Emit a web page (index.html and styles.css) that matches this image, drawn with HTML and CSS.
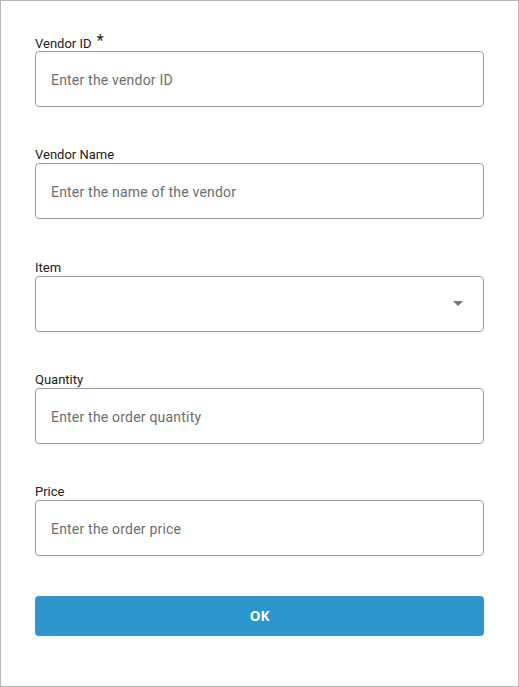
FILE: index.html
```html
<!DOCTYPE html>
<html>
<head>
<meta charset="utf-8">
<link rel="stylesheet" href="styles.css">
</head>
<body>
<form class="form">
  <div class="field">
    <label class="label">Vendor ID <span class="req">*</span></label>
    <div class="input"><span class="ph">Enter the vendor ID</span></div>
  </div>
  <div class="field">
    <label class="label">Vendor Name</label>
    <div class="input"><span class="ph">Enter the name of the vendor</span></div>
  </div>
  <div class="field">
    <label class="label">Item</label>
    <div class="input select">
      <span class="ph"></span>
      <svg class="caret" width="10" height="5" viewBox="0 0 10 5"><path d="M0 0h10L5 5z" fill="#757575"/></svg>
    </div>
  </div>
  <div class="field">
    <label class="label">Quantity</label>
    <div class="input"><span class="ph">Enter the order quantity</span></div>
  </div>
  <div class="field">
    <label class="label">Price</label>
    <div class="input"><span class="ph">Enter the order price</span></div>
  </div>
  <button type="button" class="btn">OK</button>
</form>
</body>
</html>
```
FILE: styles.css
```css
html, body {
  margin: 0;
  padding: 0;
  background: #fff;
}
body {
  width: 519px;
  height: 687px;
  box-sizing: border-box;
  border: 1px solid #b5b5b5;
  font-family: Roboto, "Liberation Sans", sans-serif;
}
.form {
  display: flex;
  flex-direction: column;
  gap: 39.25px;
  padding: 33px 34px 0 34px;
}
.field {
  display: flex;
  flex-direction: column;
}
.label {
  font-size: 13px;
  line-height: 16px;
  height: 16px;
  padding-top: 1px;
  color: #212121;
}
.req {
  font-size: 16px;
  margin-left: 2px;
  position: relative;
  top: -2px;
  color: #212121;
}
.input {
  height: 56px;
  box-sizing: border-box;
  border: 1px solid #9e9e9e;
  border-radius: 4px;
  display: flex;
  align-items: center;
  padding: 2px 20px 0 15px;
}
.ph {
  font-size: 14px;
  letter-spacing: 0.2px;
  color: #6e6e6e;
  flex: 1;
}
.select {
  padding-top: 0;
}
.caret {
  display: block;
}
.btn {
  margin-top: 0.75px;
  height: 40px;
  border: none;
  border-radius: 4px;
  background: #2b97cd;
  color: #fff;
  font-family: "Open Sans", "Noto Sans", sans-serif;
  font-weight: 700;
  font-size: 13.5px;
  cursor: pointer;
}
```
